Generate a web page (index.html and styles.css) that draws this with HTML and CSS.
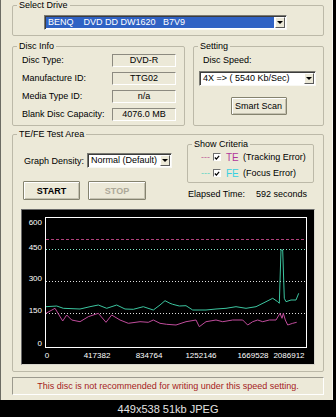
FILE: index.html
```html
<!DOCTYPE html>
<html lang="en">

<head>
    <meta charset="UTF-8">
    <meta name="viewport" content="width=device-width, initial-scale=1.0">
    <title>TE/FE Test</title>
    <link rel="stylesheet" href="styles.css">
</head>

<body>
    <div class="window">
        <fieldset class="group drive-group">
            <legend>Select Drive</legend>
            <div class="combo combo-drive">
                <span class="combo-text selected">BENQ&nbsp;&nbsp;&nbsp;&nbsp;DVD DD DW1620&nbsp;&nbsp;&nbsp;B7V9</span>
                <span class="combo-arrow"></span>
            </div>
        </fieldset>

        <div class="top-row">
            <fieldset class="group info-group">
                <legend>Disc Info</legend>
                <div class="info-row">
                    <span class="info-label">Disc Type:</span>
                    <span class="info-value">DVD-R</span>
                </div>
                <div class="info-row">
                    <span class="info-label">Manufacture ID:</span>
                    <span class="info-value">TTG02</span>
                </div>
                <div class="info-row">
                    <span class="info-label">Media Type ID:</span>
                    <span class="info-value">n/a</span>
                </div>
                <div class="info-row">
                    <span class="info-label">Blank Disc Capacity:</span>
                    <span class="info-value">4076.0 MB</span>
                </div>
            </fieldset>

            <fieldset class="group setting-group">
                <legend>Setting</legend>
                <div class="speed-label">Disc Speed:</div>
                <div class="combo combo-speed">
                    <span class="combo-text">4X =&gt; ( 5540 Kb/Sec)</span>
                    <span class="combo-arrow"></span>
                </div>
                <button class="btn btn-scan">Smart Scan</button>
            </fieldset>
        </div>

        <fieldset class="group test-group">
            <legend>TE/FE Test Area</legend>
            <div class="test-controls">
                <div class="test-left">
                    <div class="density-row">
                        <span class="density-label">Graph Density:</span>
                        <div class="combo combo-density">
                            <span class="combo-text">Normal (Default)</span>
                            <span class="combo-arrow"></span>
                        </div>
                    </div>
                    <div class="button-row">
                        <button class="btn btn-start">START</button>
                        <button class="btn btn-stop" disabled>STOP</button>
                    </div>
                </div>

                <div class="test-right">
                    <fieldset class="group criteria-group">
                        <legend>Show Criteria</legend>
                        <div class="criteria-row">
                            <span class="dash dash-te">---</span>
                            <span class="check"><svg width="7" height="7" viewBox="0 0 7 7"><path d="M1 3.5 L2.8 5.3 L6 1.5" fill="none" stroke="#000" stroke-width="1.4"/></svg></span>
                            <span class="tag tag-te">TE</span>
                            <span>(Tracking Error)</span>
                        </div>
                        <div class="criteria-row">
                            <span class="dash dash-fe">---</span>
                            <span class="check"><svg width="7" height="7" viewBox="0 0 7 7"><path d="M1 3.5 L2.8 5.3 L6 1.5" fill="none" stroke="#000" stroke-width="1.4"/></svg></span>
                            <span class="tag tag-fe">FE</span>
                            <span>(Focus Error)</span>
                        </div>
                    </fieldset>
                    <div class="elapsed">
                        <span class="elapsed-label">Elapsed Time:</span>
                        <span>592 seconds</span>
                    </div>
                </div>
            </div>

            <div class="graph">
                <svg width="291" height="154" viewBox="22 210 291 154">
                    <!-- limit lines -->
                    <line x1="46" y1="239.5" x2="306" y2="239.5" stroke="#b0407a" stroke-dasharray="3 2"/>
                    <line x1="46" y1="249.5" x2="306" y2="249.5" stroke="#80e8c8" stroke-dasharray="1 2"/>
                    <line x1="46" y1="281.5" x2="306" y2="281.5" stroke="#e0e0e0" stroke-dasharray="1 2"/>
                    <line x1="46" y1="313.5" x2="306" y2="313.5" stroke="#e0e0e0" stroke-dasharray="1 2"/>

                    <!-- focus error -->
                    <polyline fill="none" stroke="#3cc6a0" stroke-width="1"
                        points="46,306.7 56.7,306 63.3,308.3 80,309 90,306.7 98.3,305 106.7,308.3 116.7,305 125,309 133.3,309.3 143.3,306.7 153.3,310 160,305 165,300.7 170,303.3 172.7,304.3 179.3,306 186,305.7 192.7,310 206,310 216,309 226,308.3 236,306.7 246,308.3 256,306.7 266,301.7 272.7,298.3 277.7,301.7 279.3,303.3 281,250 282.7,250 284.3,298.3 286,301.7 291,300 296,300 298.7,293.3"/>

                    <!-- tracking error -->
                    <polyline fill="none" stroke="#c04c9c" stroke-width="1"
                        points="46,313.3 55,308.3 62.7,321 66.7,315 71.7,320 80,321.7 88.3,316.7 98.3,313.3 106,322.3 111.7,315 120,320 128.3,323.3 140,321.7 148.3,322.3 153.3,320 160,323.3 166.7,324.3 176,325 186,321.7 196,320 199.3,326.7 206,321.7 216,320 222.7,321.7 232.7,320 242.7,320 247.7,325 252.7,321.7 257.7,320 262.7,321.7 269.3,320 276,320 280,313.3 282,318.3 283.3,313.3 285.3,320 287.7,325 292.7,323.3 296.7,322.3"/>

                    <rect x="45.5" y="217.5" width="261" height="130" fill="none" stroke="#fff"/>

                    <g class="axis-label" text-anchor="end">
                        <text x="42" y="225">600</text>
                        <text x="42" y="250">450</text>
                        <text x="42" y="281">300</text>
                        <text x="42" y="313">150</text>
                        <text x="42" y="346">0</text>
                    </g>
                    <g class="axis-label" text-anchor="middle">
                        <text x="47" y="358">0</text>
                        <text x="97" y="358">417382</text>
                        <text x="149" y="358">834764</text>
                        <text x="201" y="358">1252146</text>
                        <text x="253" y="358">1669528</text>
                        <text x="289" y="358">2086912</text>
                    </g>
                </svg>
            </div>
        </fieldset>

        <div class="status">This disc is not recommended for writing under this speed setting.</div>
    </div>

    <div class="caption">449x538 51kb JPEG</div>
</body>

</html>
```

FILE: styles.css
```css
* {
    margin: 0;
    padding: 0;
    box-sizing: border-box;
}

body {
    background-color: #000;
    font-family: 'Liberation Sans', Arial, sans-serif;
    font-size: 9px;
    color: #000;
}

.window {
    width: 333px;
    height: 400px;
    background-color: #ece9d8;
    border-left: 1px solid #6c6c64;
    border-right: 1px solid #f6f5ef;
    padding: 0 8px 0 11px;
}

/* group boxes: no side padding, so the caption sits 6px in from the border */
.group {
    border: 1px solid #bcb9a8;
    border-radius: 2px;
    min-width: 0;
}

.group legend {
    margin-left: 4px;
    padding: 0 2px;
    line-height: 10px;
}

.drive-group {
    padding: 5px 0;
}

.combo {
    display: flex;
    height: 15px;
    background: #fff;
    border: 1px solid;
    border-color: #7a7a72 #f8f8f4 #f8f8f4 #7a7a72;
    box-shadow: inset 1px 1px 0 #3c3c3c;
    padding: 1px;
}

.combo-text {
    flex: 1;
    line-height: 11px;
    padding-left: 2px;
    white-space: nowrap;
    overflow: hidden;
}

.combo-text.selected {
    background-color: #2f62c4;
    color: #fff;
    margin-right: 1px;
}

.combo-arrow {
    width: 10px;
    background: #ece9d8;
    border: 1px solid;
    border-color: #fff #5a5a5a #5a5a5a #fff;
    display: flex;
    align-items: center;
    justify-content: center;
}

.combo-arrow::after {
    content: "";
    border-left: 3px solid transparent;
    border-right: 3px solid transparent;
    border-top: 3px solid #000;
}

.combo-drive {
    width: 243px;
    margin-left: 31px;
}

.top-row {
    display: flex;
    gap: 8px;
    margin-top: 5px;
}

.info-group {
    width: 173px;
    padding-bottom: 2px;
}

.info-row {
    display: flex;
    align-items: center;
    justify-content: space-between;
    height: 18px;
    margin: 0 8px 0 9px;
}

.info-value {
    width: 64px;
    height: 13px;
    line-height: 11px;
    text-align: center;
    border: 1px solid;
    border-color: #8c8a80 #fff #fff #8c8a80;
}

.setting-group {
    flex: 1;
    display: flex;
    flex-direction: column;
}

.speed-label {
    margin: 3px 0 0 9px;
    line-height: 12px;
}

.combo-speed {
    margin: 5px 7px 0 5px;
}

.btn {
    font-family: inherit;
    font-size: 9px;
    background: #ece9d8;
    border: 1px solid #85836f;
    border-radius: 1px;
    box-shadow: inset 1px 1px 0 #fff, inset -1px -1px 0 #c4c1b0;
    color: #000;
}

.btn-scan {
    align-self: center;
    margin-top: 11px;
    width: 56px;
    height: 18px;
}

.test-group {
    margin-top: 3px;
    padding-bottom: 6px;
}

.test-controls {
    display: flex;
    margin: 0 8px;
}

.test-left {
    flex: 1;
}

.density-row {
    display: flex;
    align-items: center;
    margin-top: 14px;
}

.density-label {
    width: 63px;
    margin-left: 3px;
}

.combo-density {
    width: 85px;
}

.button-row {
    display: flex;
    gap: 8px;
    margin-top: 13px;
    margin-left: 2px;
}

.btn-start,
.btn-stop {
    width: 57px;
    height: 19px;
    font-weight: bold;
}

.btn-stop {
    width: 58px;
    color: #aca899;
}

.test-right {
    width: 128px;
}

.criteria-group {
    margin-right: 1px;
    padding-bottom: 1px;
}

.criteria-row {
    display: flex;
    align-items: center;
    height: 16px;
}

.dash {
    margin-left: 13px;
    width: 12px;
}

.dash-te {
    color: #c0609a;
}

.dash-fe {
    color: #60d4c4;
}

.check {
    width: 8px;
    height: 8px;
    background: #fff;
    border: 1px solid;
    border-color: #6e6e6e #fff #fff #6e6e6e;
    display: flex;
    align-items: center;
    justify-content: center;
    margin-right: 5px;
}

.tag {
    font-size: 10px;
    width: 17px;
}

.tag-te {
    color: #b0369a;
}

.tag-fe {
    color: #38d0e0;
}

.elapsed {
    display: flex;
    margin-top: 5px;
    line-height: 12px;
    padding-left: 1px;
}

.elapsed-label {
    width: 68px;
}

.graph {
    margin: 9px 8px 0;
    height: 156px;
    background: #000;
    border: 1px solid;
    border-color: #6a6a6a #d8d6cc #d8d6cc #6a6a6a;
}

.graph svg {
    display: block;
}

.axis-label {
    font-family: 'Liberation Sans', Arial, sans-serif;
    font-size: 8px;
    fill: #fff;
}

.status {
    margin-top: 5px;
    height: 18px;
    line-height: 16px;
    text-align: center;
    color: #a51c1c;
    border: 1px solid;
    border-color: #9c9a8e #fff #fff #9c9a8e;
}

.caption {
    width: 336px;
    margin-top: 2px;
    line-height: 14px;
    font-size: 11px;
    text-align: center;
    color: #e4e4e4;
}
```
